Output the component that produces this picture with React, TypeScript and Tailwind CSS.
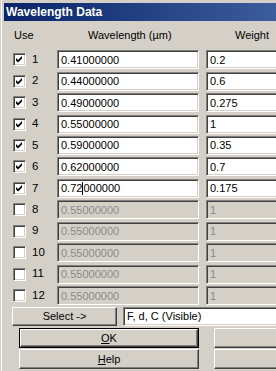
import React from 'react'

const rows = [
  { n: 1, on: true, wl: '0.41000000', w: '0.2' },
  { n: 2, on: true, wl: '0.44000000', w: '0.6' },
  { n: 3, on: true, wl: '0.49000000', w: '0.275' },
  { n: 4, on: true, wl: '0.55000000', w: '1' },
  { n: 5, on: true, wl: '0.59000000', w: '0.35' },
  { n: 6, on: true, wl: '0.62000000', w: '0.7' },
  { n: 7, on: true, wl: '0.72000000', w: '0.175' },
  { n: 8, on: false, wl: '0.55000000', w: '1' },
  { n: 9, on: false, wl: '0.55000000', w: '1' },
  { n: 10, on: false, wl: '0.55000000', w: '1' },
  { n: 11, on: false, wl: '0.55000000', w: '1' },
  { n: 12, on: false, wl: '0.55000000', w: '1' },
]

const sunken =
  'border border-t-[#808080] border-l-[#808080] border-b-white border-r-white shadow-[inset_1px_1px_#404040,inset_-1px_-1px_#d4d0c8]'
const raised =
  'border border-t-white border-l-white border-b-[#404040] border-r-[#404040] shadow-[inset_-1px_-1px_#808080,inset_1px_1px_#d4d0c8]'

function Check({ on }: { on: boolean }) {
  return (
    <div className={`w-[13px] h-[13px] bg-white shrink-0 flex items-center justify-center ${sunken}`}>
      {on && (
        <svg width="7" height="7" viewBox="0 0 7 7">
          <polygon points="0,2 2,4 6,0 6,2.6 2,6.6 0,4.6" fill="#000" />
        </svg>
      )}
    </div>
  )
}

function Field({ value, enabled, width, cursorAt }: { value: string; enabled: boolean; width: string; cursorAt?: number }) {
  return (
    <div
      className={`${width} h-[19px] shrink-0 flex items-center pl-[3px] pt-[1px] ${sunken} ${
        enabled ? 'bg-white text-black' : 'bg-[#d4d0c8] text-[#8a8a8a]'
      }`}
    >
      {cursorAt !== undefined ? (
        <>
          <span>{value.slice(0, cursorAt)}</span>
          <span className="w-px h-[13px] bg-black" />
          <span>{value.slice(cursorAt)}</span>
        </>
      ) : (
        value
      )}
    </div>
  )
}

export default function App() {
  return (
    <div
      className="w-[276px] h-[371px] bg-[#d4d0c8] overflow-hidden pl-[4px] pt-[3px] text-[11px] leading-none text-black shadow-[inset_1px_0_#d4d0c8,inset_2px_0_white]"
      style={{ fontFamily: '"Liberation Sans", Arial, sans-serif' }}
    >
      <div className="h-[18px] flex items-center pl-[2px] bg-gradient-to-r from-[#0a246a] to-[#3d5c9c] text-white font-bold text-[12px]">
        Wavelength Data
      </div>

      <div className="h-[28px] flex items-center">
        <span className="w-[84px] shrink-0 pl-[10px]">Use</span>
        <span className="w-[147px] shrink-0">Wavelength (µm)</span>
        <span className="shrink-0">Weight</span>
      </div>

      <div className="flex flex-col">
        {rows.map((r) => (
          <div key={r.n} className="h-[21.45px] flex items-center pl-[9px]">
            <Check on={r.on} />
            <span className="w-[31px] shrink-0 pl-[6px] text-[11.5px]">{r.n}</span>
            <Field value={r.wl} enabled={r.on} width="w-[142px]" cursorAt={r.n === 7 ? 4 : undefined} />
            <div className="w-[7px] shrink-0" />
            <Field value={r.w} enabled={r.on} width="w-[80px]" />
          </div>
        ))}
      </div>

      <div className="flex items-center mt-[1px] h-[19px]">
        <button className={`ml-[8px] w-[105px] h-[19px] shrink-0 bg-[#d4d0c8] flex items-center justify-center ${raised}`}>
          Select -&gt;
        </button>
        <div className={`ml-[6px] w-[160px] h-[19px] shrink-0 bg-white flex items-center pl-[3px] ${sunken}`}>
          F, d, C (Visible)
        </div>
      </div>

      <div className="flex mt-[2px] h-[20px]">
        <div className="ml-[15px] w-[180px] h-[20px] shrink-0 border border-black">
          <button className={`w-full h-full bg-[#d4d0c8] flex items-center justify-center ${raised}`}>
            <span>
              <span className="underline">O</span>K
            </span>
          </button>
        </div>
        <button className={`ml-[15px] w-[80px] h-[20px] shrink-0 bg-[#d4d0c8] ${raised}`} />
      </div>

      <div className="flex mt-[1px] h-[20px]">
        <button className={`ml-[15px] w-[180px] h-[20px] shrink-0 bg-[#d4d0c8] flex items-center justify-center ${raised}`}>
          <span>
            <span className="underline">H</span>elp
          </span>
        </button>
        <button className={`ml-[15px] w-[80px] h-[20px] shrink-0 bg-[#d4d0c8] ${raised}`} />
      </div>
    </div>
  )
}
